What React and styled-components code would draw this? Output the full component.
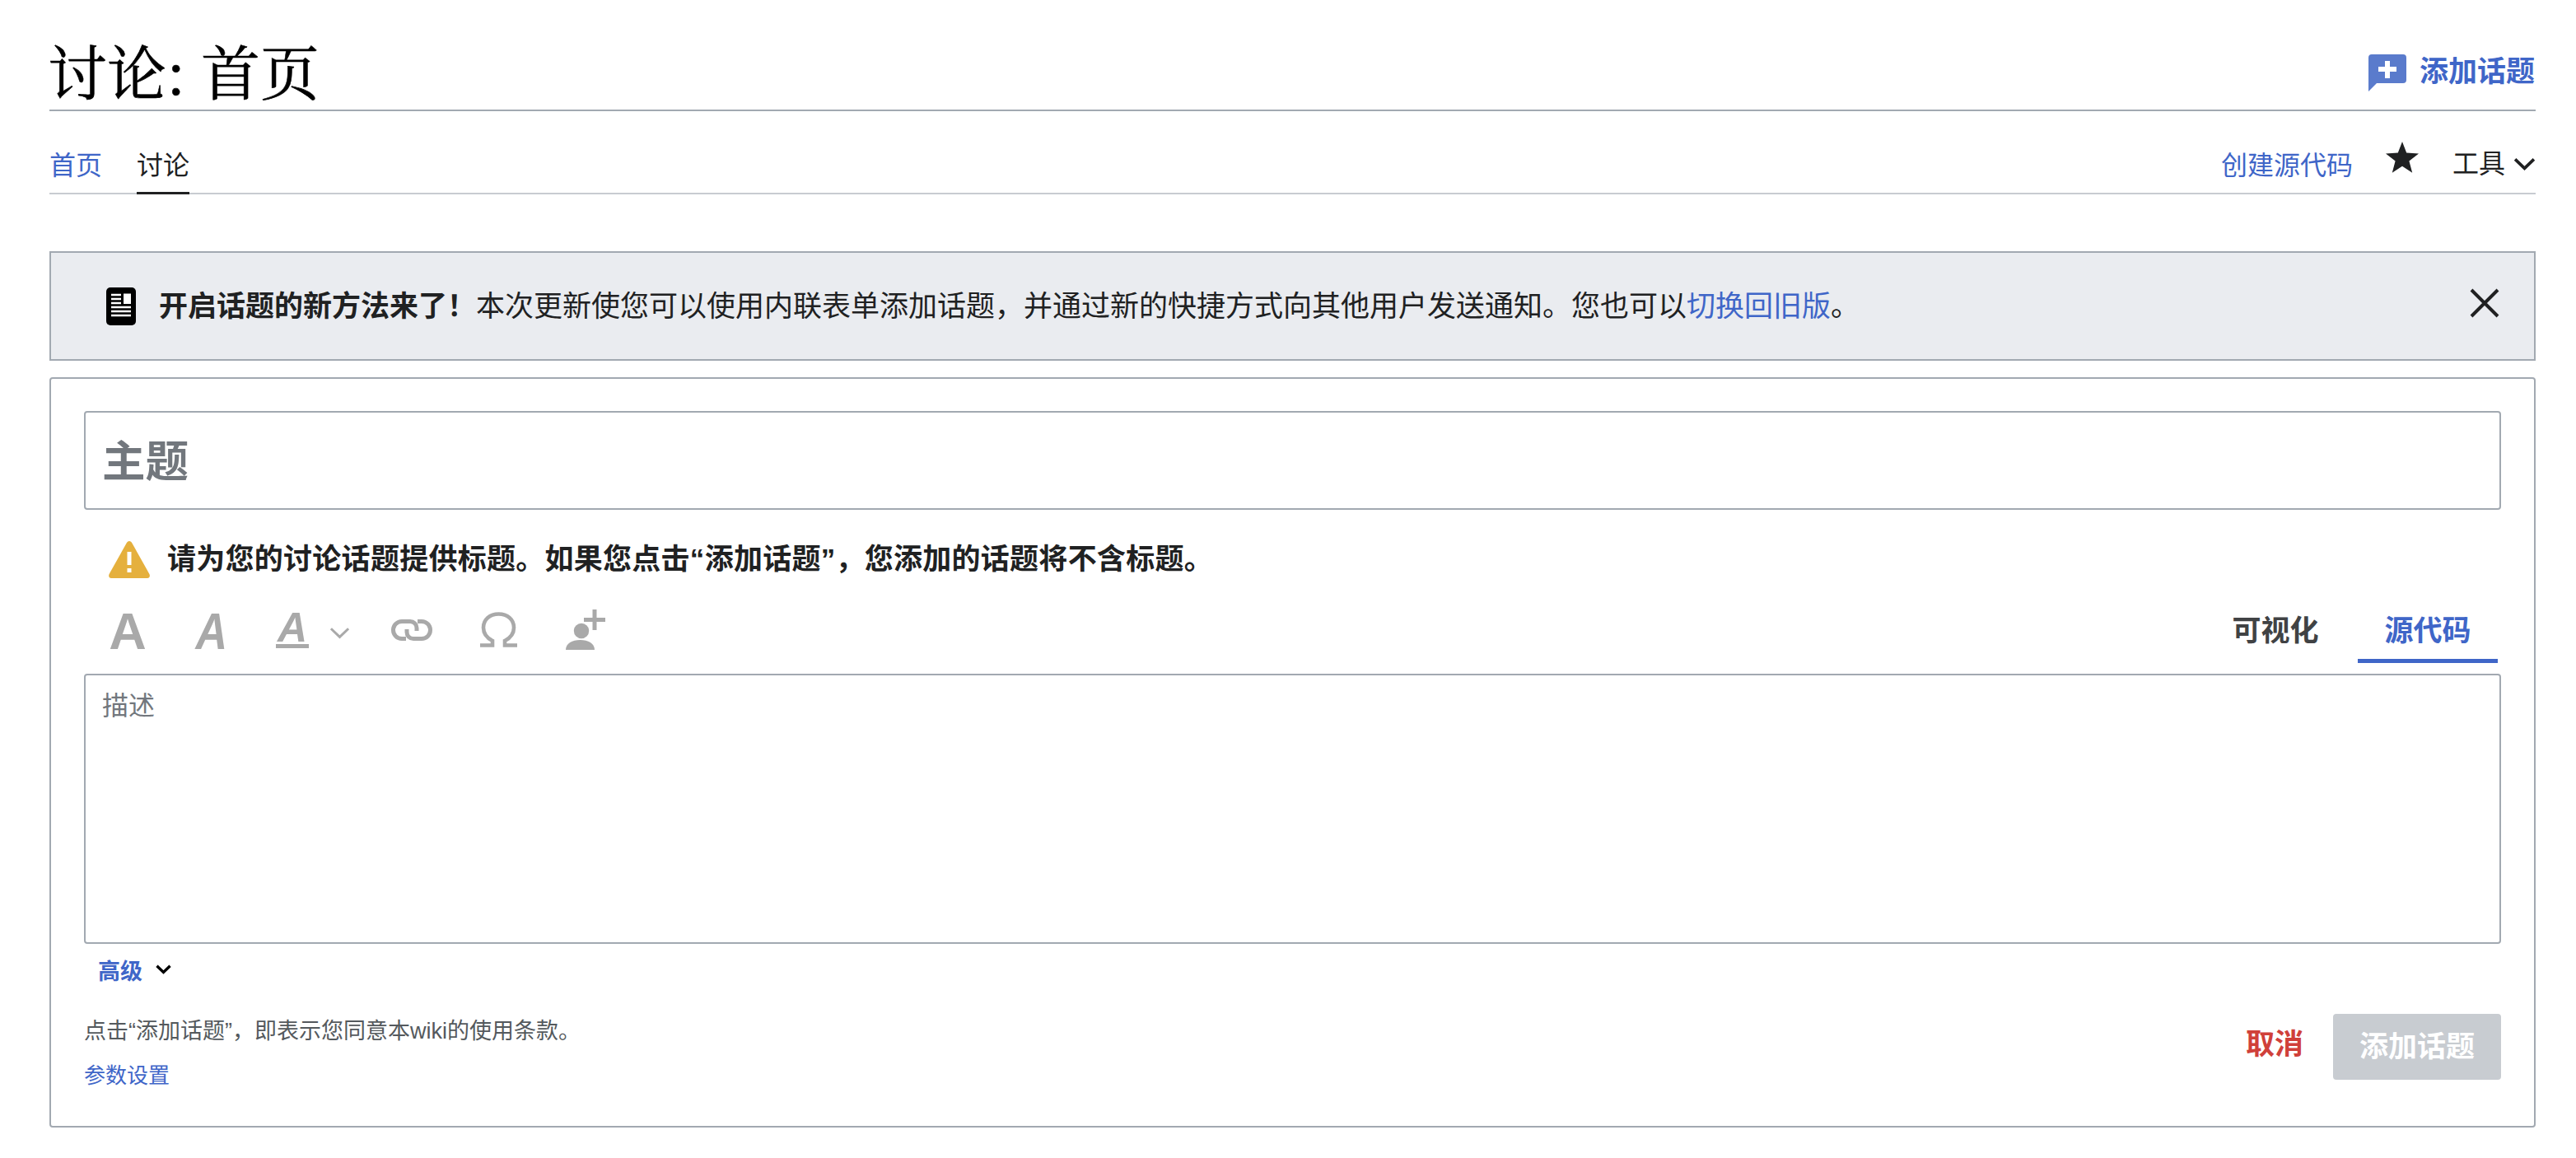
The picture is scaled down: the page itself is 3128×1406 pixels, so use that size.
import React from "react";
import styled, { createGlobalStyle } from "styled-components";

const Global = createGlobalStyle`
  html, body { margin: 0; padding: 0; background: #fff; }
  body { font-family: "Noto Sans CJK SC", "Liberation Sans", sans-serif; color: #202122; }
`;
const LINK = "#3f66c8";
const BORDER = "#a2a9b1";
const SANS = `"Liberation Sans", "Noto Sans CJK SC", sans-serif`;

const Page = styled.div`
  padding: 0 49px 36px 60px;
  font-family: ${SANS};
`;
const Header = styled.header`
  height: 133px;
  border-bottom: 2px solid ${BORDER};
  display: flex;
  align-items: flex-start;
  justify-content: space-between;
`;
const Title = styled.h1`
  margin: 43px 0 0 -2px;
  font: 400 72px/82px "Noto Serif CJK SC", "Liberation Serif", "Noto Sans CJK SC", serif;
  color: #000;
  -webkit-text-stroke: 0.6px #000;
`;
const AddTopic = styled.a`
  margin: 66px 1px 0 0;
  display: flex;
  align-items: flex-start;
  gap: 16px;
  font-size: 35px;
  line-height: 42px;
  font-weight: 700;
  color: ${LINK};
`;
const Tabs = styled.nav`
  height: 99px;
  border-bottom: 2px solid #c8ccd1;
  display: flex;
  justify-content: space-between;
  align-items: stretch;
`;
const TabGroup = styled.div`
  display: flex;
  align-items: flex-end;
  gap: ${(p) => p.$gap || 42}px;
`;
const Tab = styled.a`
  font-size: 32px;
  line-height: 44px;
  padding-bottom: 10px;
  margin-bottom: -2px;
  margin-right: ${(p) => p.$mr || 0}px;
  color: ${(p) => (p.$link ? LINK : "#202122")};
  border-bottom: 3px solid ${(p) => (p.$active ? "#202122" : "transparent")};
`;
const ToolsLabel = styled.span`
  display: flex;
  align-items: center;
  gap: 10px;
  margin-left: 1px;
  font-size: 32px;
  line-height: 44px;
  padding-bottom: 13px;
`;
const StarWrap = styled.span`
  display: flex;
  padding-bottom: 24px;
`;
const Notice = styled.div`
  margin-top: 69px;
  height: 129px;
  background: #eaecf0;
  border: 2px solid ${BORDER};
  display: flex;
  align-items: center;
  padding: 0 42px 0 67px;
  font-size: 35px;
  color: #202122;
`;
const NoticeText = styled.div`
  flex: 1;
  margin-left: 28px;
  line-height: 48px;
`;
const CloseWrap = styled.span`
  display: flex;
  margin-top: -7px;
`;
const Strong = styled.strong`
  font-weight: 700;
`;
const Link = styled.a`
  color: ${LINK};
`;
const Card = styled.section`
  margin-top: 20px;
  border: 2px solid ${BORDER};
  border-radius: 4px;
  padding: 39px 40px 40px;
`;
const TitleInput = styled.input`
  display: block;
  box-sizing: border-box;
  width: 100%;
  height: 120px;
  border: 2px solid ${BORDER};
  border-radius: 4px;
  padding: 2px 20px 0;
  outline: none;
  font: 700 52.5px ${SANS};
  &::placeholder { color: #72777d; opacity: 1; }
`;
const Warning = styled.div`
  margin-top: 35px;
  height: 50px;
  display: flex;
  align-items: center;
  gap: 21px;
  padding-left: 30px;
  font-size: 35px;
  font-weight: 700;
  color: #202122;
`;
const WarningText = styled.span`
  margin-top: -8px;
  letter-spacing: 0.27px;
`;
const Toolbar = styled.div`
  margin-top: 35px;
  height: 66px;
  display: flex;
  align-items: flex-start;
  justify-content: space-between;
  padding-left: 30px;
`;
const ToolIcons = styled.div`
  display: flex;
  align-items: flex-start;
`;
const Slot = styled.span`
  display: flex;
  margin-left: ${(p) => p.$ml || 0}px;
  margin-top: ${(p) => p.$mt || 0}px;
`;
const LetterIcon = styled.span`
  display: block;
  width: ${(p) => p.$w}px;
  height: ${(p) => p.$h || 50}px;
  margin-left: ${(p) => p.$ml || 0}px;
  margin-top: ${(p) => p.$mt || 0}px;
  font-family: "Liberation Sans", sans-serif;
  font-size: ${(p) => p.$size}px;
  line-height: ${(p) => p.$lh || 50}px;
  font-weight: 700;
  font-style: ${(p) => (p.$italic ? "italic" : "normal")};
  text-align: center;
  color: #a9a9a9;
  border-bottom: ${(p) => (p.$under ? "5px solid #a9a9a9" : "none")};
  box-sizing: border-box;
`;
const NarrowGlyph = styled.span`
  display: inline-block;
  transform: scaleX(${(p) => p.$sx});
`;
const ModeTabs = styled.div`
  display: flex;
  align-items: flex-start;
  margin-right: 4px;
`;
const ModeTab = styled.span`
  height: 66px;
  box-sizing: border-box;
  width: ${(p) => p.$w}px;
  text-align: center;
  font-size: 35px;
  line-height: 54px;
  font-weight: 700;
  color: ${(p) => (p.$active ? LINK : "#404244")};
  border-bottom: 5px solid ${(p) => (p.$active ? LINK : "transparent")};
`;
const Description = styled.textarea`
  display: block;
  box-sizing: border-box;
  margin-top: 13px;
  width: 100%;
  height: 328px;
  border: 2px solid ${BORDER};
  border-radius: 4px;
  padding: 15px 20px;
  resize: none;
  outline: none;
  font: 400 32px/44px ${SANS};
  &::placeholder { color: #72777d; opacity: 1; }
`;
const Advanced = styled.div`
  margin-top: 11px;
  height: 40px;
  display: flex;
  align-items: center;
  gap: 16px;
  padding-left: 17px;
  font-size: 27px;
  font-weight: 700;
  color: ${LINK};
`;
const Footer = styled.footer`
  margin-top: 34px;
  display: flex;
  justify-content: space-between;
  align-items: flex-start;
`;
const Legal = styled.div`
  font-size: 27px;
  line-height: 42px;
  color: #54595d;
`;
const Pref = styled.a`
  display: block;
  margin-top: 12px;
  font-size: 26px;
  color: ${LINK};
`;
const Actions = styled.div`
  display: flex;
  align-items: center;
  gap: 36px;
`;
const Cancel = styled.span`
  font-size: 35px;
  line-height: 44px;
  margin-top: -7px;
  font-weight: 700;
  color: #d0403a;
`;
const Submit = styled.span`
  width: 204px;
  height: 80px;
  box-sizing: border-box;
  padding-bottom: 8px;
  display: flex;
  align-items: center;
  justify-content: center;
  background: #c8ccd1;
  border-radius: 4px;
  color: #fff;
  font-size: 35px;
  font-weight: 700;
`;

const Chevron = ({ w = 27, color = "#202122", sw = 3.8 }) => (
  <svg width={w} height={w * 0.6} viewBox="0 0 28 17" fill="none">
    <path d="M2 2.5 L14 14 L26 2.5" stroke={color} strokeWidth={(sw * 28) / w} />
  </svg>
);

export default function App() {
  return (
    <>
      <Global />
      <Page>
        <Header>
          <Title>讨论: 首页</Title>
          <AddTopic>
            <svg width="46" height="46" viewBox="0 0 46 46">
              <path d="M4 0 H42 a4 4 0 0 1 4 4 V31 a4 4 0 0 1 -4 4 H10 L0 45 V4 a4 4 0 0 1 4 -4 Z" fill="#5a7bcc" />
              <path d="M20 8 h6 v7 h8 v6 h-8 v8 h-6 v-8 h-8 v-6 h8 Z" fill="#fff" />
            </svg>
            添加话题
          </AddTopic>
        </Header>
        <Tabs>
          <TabGroup>
            <Tab $link>首页</Tab>
            <Tab $active>讨论</Tab>
          </TabGroup>
          <TabGroup $gap={40}>
            <Tab $link>创建源代码</Tab>
            <StarWrap>
              <svg width="40" height="38" viewBox="0 0 40 38">
                <path d="M20 0 L25.2 13.6 L40 14.5 L28.4 23.6 L32.2 37.8 L20 29.8 L7.8 37.8 L11.6 23.6 L0 14.5 L14.8 13.6 Z" fill="#202122" />
              </svg>
            </StarWrap>
            <ToolsLabel>
              工具
              <Chevron />
            </ToolsLabel>
          </TabGroup>
        </Tabs>
        <Notice>
          <svg width="36" height="46" viewBox="0 0 36 46">
            <rect width="36" height="46" rx="5" fill="#000" />
            <path d="M6 9 h12 M6 14 h12 M6 19 h12 M6 24 h24 M6 29 h24 M6 34 h24" stroke="#fff" strokeWidth="2.4" />
            <rect x="21" y="7.5" width="9" height="12.5" fill="#fff" />
          </svg>
          <NoticeText>
            <Strong>开启话题的新方法来了！</Strong>本次更新使您可以使用内联表单添加话题，并通过新的快捷方式向其他用户发送通知。您也可以<Link>切换回旧版</Link>。
          </NoticeText>
          <CloseWrap>
            <svg width="36" height="36" viewBox="0 0 36 36">
              <path d="M2 2 L34 34 M34 2 L2 34" stroke="#202122" strokeWidth="4" />
            </svg>
          </CloseWrap>
        </Notice>
        <Card>
          <TitleInput placeholder="主题" readOnly />
          <Warning>
            <svg width="50" height="45" viewBox="0 0 50 45">
              <path d="M25 0 c1.6 0 2.6 1 3.4 2.4 L49.4 40 c1.2 2.4 0 5 -2.6 5 H3.2 c-2.6 0 -3.8 -2.6 -2.6 -5 L21.6 2.4 C22.4 1 23.4 0 25 0 Z" fill="#e5b03d" />
              <path d="M22.5 13 h5 v16 h-5 Z M22.5 33 h5 v5 h-5 Z" fill="#fff" />
            </svg>
            <WarningText>请为您的讨论话题提供标题。如果您点击“添加话题”，您添加的话题将不含标题。</WarningText>
          </Warning>
          <Toolbar>
            <ToolIcons>
              <LetterIcon $w={46} $size={63} $mt={2}>A</LetterIcon>
              <LetterIcon $w={46} $size={63} $italic $ml={56} $mt={2}>
                <NarrowGlyph $sx={0.85}>A</NarrowGlyph>
              </LetterIcon>
              <LetterIcon $w={40} $size={50} $h={48} $lh={46} $italic $under $ml={55}>A</LetterIcon>
              <Slot $ml={25} $mt={22}>
                <Chevron w={25} color="#a9a9a9" sw={3} />
              </Slot>
              <Slot $ml={50} $mt={13}>
                <svg width="50" height="26" viewBox="0 0 50 26" fill="none" stroke="#a9a9a9" strokeWidth="5">
                  <path d="M18 23.5 H13 a10.5 10.5 0 0 1 0 -21 H23 a8 8 0 0 1 8 8 V14" />
                  <path d="M32 2.5 H37 a10.5 10.5 0 0 1 0 21 H27 a8 8 0 0 1 -8 -8 V12" />
                </svg>
              </Slot>
              <Slot $ml={58} $mt={4}>
                <svg width="45" height="43" viewBox="0 0 45 43" fill="none" stroke="#a9a9a9" strokeWidth="4.6">
                  <path d="M0 40.5 H15 V35 C7 31 4 25 4 19 C4 9 12 2.5 22.5 2.5 C33 2.5 41 9 41 19 C41 25 38 31 30 35 V40.5 H45" />
                </svg>
              </Slot>
              <Slot $ml={59}>
                <svg width="48" height="50" viewBox="0 0 48 50" fill="#a9a9a9">
                  <circle cx="19" cy="27" r="9.2" />
                  <path d="M0 50 C0 42 8 38 17.5 38 C27 38 35 42 35 50 Z" />
                  <path d="M32.5 1 h5 v10 h10.5 v5 h-10.5 v10 h-5 v-10 h-10.5 v-5 h10.5 Z" />
                </svg>
              </Slot>
            </ToolIcons>
            <ModeTabs>
              <ModeTab $w={140}>可视化</ModeTab>
              <ModeTab $w={30} />
              <ModeTab $active $w={170}>源代码</ModeTab>
            </ModeTabs>
          </Toolbar>
          <Description placeholder="描述" readOnly />
          <Advanced>
            高级
            <Chevron w={19} color="#000" sw={3.4} />
          </Advanced>
          <Footer>
            <Legal>
              点击“添加话题”，即表示您同意本wiki的使用条款。
              <Pref>参数设置</Pref>
            </Legal>
            <Actions>
              <Cancel>取消</Cancel>
              <Submit>添加话题</Submit>
            </Actions>
          </Footer>
        </Card>
      </Page>
    </>
  );
}
